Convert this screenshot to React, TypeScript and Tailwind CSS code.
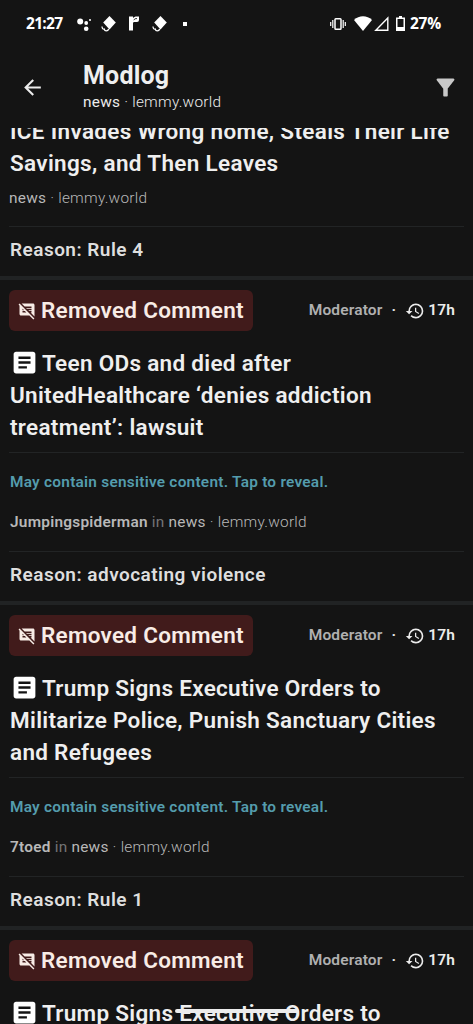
import React from "react";
import {
  MdArrowBack,
  MdArticle,
  MdCommentsDisabled,
  MdFilterAlt,
  MdHistory,
} from "react-icons/md";

interface LogEntry {
  id: number;
  title: string;
  author: string;
  reason: string;
}

const entries: LogEntry[] = [
  {
    id: 1,
    title: "Teen ODs and died after UnitedHealthcare ‘denies addiction treatment’: lawsuit",
    author: "Jumpingspiderman",
    reason: "advocating violence",
  },
  {
    id: 2,
    title: "Trump Signs Executive Orders to Militarize Police, Punish Sanctuary Cities and Refugees",
    author: "7toed",
    reason: "Rule 1",
  },
  {
    id: 3,
    title: "Trump Signs Executive Orders to Militarize Police, Punish Sanctuary Cities and Refugees",
    author: "7toed",
    reason: "Rule 1",
  },
];

const DiamondIcon = () => (
  <svg className="h-[18px] w-[15px]" viewBox="0 0 15 18" fill="none">
    <path d="M8.500 1 14.800 7.500 8.500 14.500 2.200 7.500Z" fill="white" />
    <path d="M1.200 11.500c-.4 2 .8 2.900 2.100 2.500.3 2.600 3.600 2.600 4.400 0" stroke="white" strokeWidth="1.300" />
  </svg>
);

const StatusBar = () => (
  <div className="flex h-[47px] items-center pl-[26px] pr-8 text-white">
    <span className="w-[51px] font-['Open_Sans',sans-serif] text-[15.5px] font-bold tracking-[-0.7px]">
      21:27
    </span>
    <svg className="h-4 w-4" viewBox="0 0 16 16" fill="white">
      <circle cx="3.200" cy="5.500" r="3" />
      <circle cx="9.200" cy="7" r="1.900" />
      <circle cx="9.200" cy="12.800" r="2.300" />
      <circle cx="13" cy="4" r="1" />
    </svg>
    <span className="ml-2">
      <DiamondIcon />
    </span>
    <svg className="ml-3 h-[15px] w-[12px]" viewBox="0 0 12 15" fill="white">
      <path d="M1 0.500h4v1.500c1-1.400 2.500-1.800 6-1.500v3.500a2 2 0 0 1-2 2H6c-1 0-1 1-1 2v6.500H1Z" />
      <path d="M5.800 4.200C6.500 2.800 7.500 2.500 9 2.600" fill="none" stroke="#141414" strokeWidth="0.900" />
    </svg>
    <span className="ml-3">
      <DiamondIcon />
    </span>
    <span className="ml-4 size-1 bg-white" />

    <svg className="ml-auto h-3.5 w-4" viewBox="0 0 16 14" fill="none" stroke="white">
      <rect x="5" y="1.800" width="6" height="10.400" rx="0.800" strokeWidth="1.500" />
      <path d="M2.800 3v8M13.200 3v8" strokeWidth="1.200" />
      <path d="M.7 5v4M15.300 5v4" strokeWidth="1.200" />
    </svg>
    <svg className="ml-2 h-[15px] w-[18px]" viewBox="0 0 18 15" fill="white">
      <path d="M0 4C5-1 13-1 18 4L9 15Z" />
    </svg>
    <svg className="ml-0.5 h-[15px] w-[15px]" viewBox="0 0 15 15" fill="none" stroke="white">
      <path d="M1.800 14.200H13.800V2Z" strokeWidth="1.400" />
    </svg>
    <svg className="ml-[7px] h-[15px] w-[9px]" viewBox="0 0 9 15" fill="white">
      <path d="M3 0h3v1.500h3V15H0V1.500h3ZM1.500 3v8h6V3Z" fillRule="evenodd" />
    </svg>
    <span className="ml-[5px] font-['Open_Sans',sans-serif] text-[15.5px] font-bold tracking-[-0.2px]">
      27%
    </span>
  </div>
);

const Community: React.FC<{ className?: string }> = ({ className = "" }) => (
  <p className={`text-[15.4px] leading-6 tracking-[0.25px] ${className}`}>
    news<span className="font-light"> · lemmy.world</span>
  </p>
);

const Header = () => (
  <header className="h-32 shrink-0">
    <StatusBar />
    <div className="flex h-[81px] items-center pr-3.5 pl-5">
      <MdArrowBack className="size-[25px] text-[#ececec]" />
      <div className="ml-[38px] flex-1">
        <h1 className="text-[25px] leading-7 font-bold tracking-[0.2px] text-[#efefef]">Modlog</h1>
        <Community className="text-[#ececec]" />
      </div>
      <MdFilterAlt className="size-[27px] text-[#c8c8c8]" />
    </div>
  </header>
);

const Reason: React.FC<{ text: string }> = ({ text }) => (
  <p className="mx-[9px] flex h-[50px] items-center border-t border-[#222425] pb-[3px] pl-px text-[19px] font-semibold tracking-[0.47px] text-[#dedede]">
    Reason: {text}
  </p>
);

const LogCard: React.FC<{ entry: LogEntry }> = ({ entry }) => (
  <article className="border-b-4 border-[#212324]">
    <div className="flex items-center justify-between pt-2.5 pr-[18px] pl-[9px]">
      <div className="flex h-[41px] w-[244px] items-center gap-[5px] rounded-md bg-[#411b1b] pl-[9px] text-[#f8ece6]">
        <MdCommentsDisabled className="size-[18px]" />
        <span className="text-[22.5px] font-semibold tracking-[0.27px] whitespace-nowrap">
          Removed Comment
        </span>
      </div>
      <div className="flex items-center text-[15.5px] font-semibold tracking-[0.15px]">
        <span className="text-[#b0b0b0]">Moderator</span>
        <span className="mx-[9px] text-[#e8e8e8]">·</span>
        <MdHistory className="size-5 text-[#ececec]" />
        <span className="ml-[3px] text-[#ececec]">17h</span>
      </div>
    </div>
    <h2 className="mx-[9px] mt-4 h-[105px] pl-px text-[22.5px] leading-8 font-semibold tracking-[0.3px] text-[#efefef]">
      <MdArticle className="mr-[3px] inline-block size-[29px] align-[-6px] text-white" />
      {entry.title}
    </h2>
    <div className="mx-[9px] border-t border-[#222425] pt-[17px] pl-px text-[15.4px] leading-6 tracking-[0.25px]">
      <p className="font-semibold text-[#549cad]">May contain sensitive content. Tap to reveal.</p>
      <p className="mt-4 mb-[17px] flex gap-1 text-[#b8b8b8]">
        <span className="font-semibold">{entry.author}</span>
        <span className="text-[#757575]">in</span>
        <Community />
      </p>
    </div>
    <Reason text={entry.reason} />
  </article>
);

const App = () => (
  <div className="relative flex h-screen flex-col overflow-hidden bg-[#141414] font-[Roboto,sans-serif]">
    <Header />
    <main className="min-h-0 flex-1 overflow-hidden">
      <article className="-mt-[13px] border-b-4 border-[#212324]">
        <h2 className="mx-[9px] h-[71px] pl-px text-[22.5px] leading-8 font-semibold tracking-[0.33px] text-[#efefef]">
          ICE Invades Wrong home, Steals Their Life Savings, and Then Leaves
        </h2>
        <Community className="mx-[9px] mb-4 text-[#b8b8b8]" />
        <Reason text="Rule 4" />
      </article>
      {entries.map((entry) => (
        <LogCard key={entry.id} entry={entry} />
      ))}
    </main>
    {/* gesture bar */}
    <div className="absolute bottom-[11px] left-[175px] h-1 w-[124px] rounded-full bg-[#ececec]" />
  </div>
);

export default App;
